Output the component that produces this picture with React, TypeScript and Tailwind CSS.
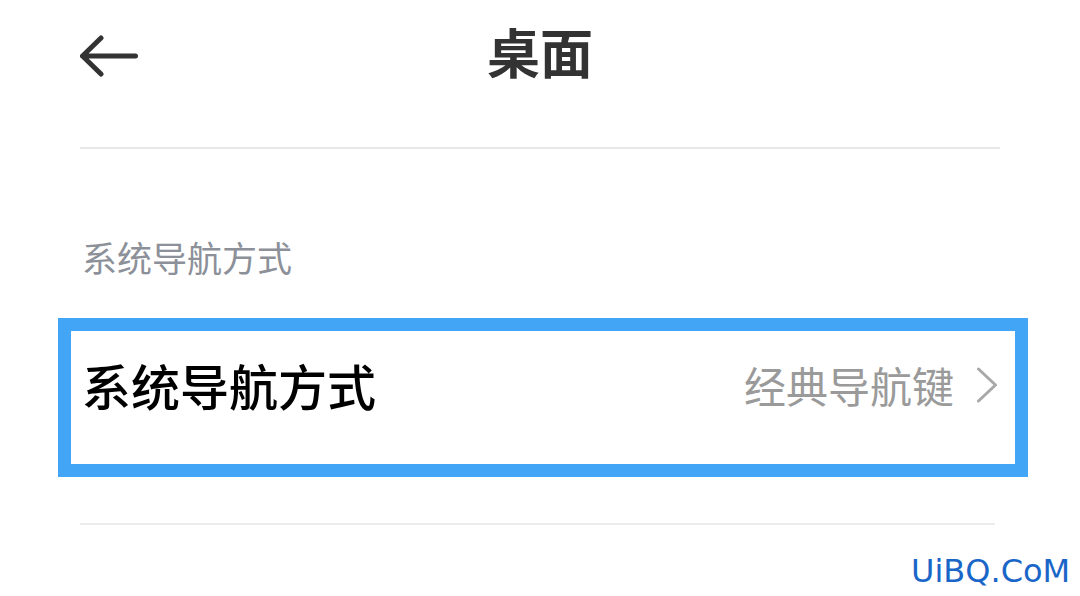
import React from "react";

export default function App() {
  const cjk = { fontFamily: '"Noto Sans CJK SC", "Noto Sans", sans-serif' };
  return (
    <div
      className="relative w-[1080px] h-[596px] overflow-hidden bg-white"
      style={cjk}
    >
      {/* Header */}
      <div className="relative h-[147px] px-[80px]">
        <div className="flex h-[116px] items-center">
          <svg width="58" height="42" viewBox="0 0 58 42" className="mt-[-4px]">
            <path
              d="M2.5 21 H55.5 M21 3 L2.5 21 L21 39"
              fill="none"
              stroke="#333333"
              strokeWidth="5"
              strokeLinecap="round"
              strokeLinejoin="round"
            />
          </svg>
        </div>
        <div className="absolute left-0 right-0 top-[19px] text-center text-[53px] font-bold leading-[64px] text-[#333333]">
          桌面
        </div>
      </div>
      <div className="mx-[80px] w-[920px] h-[2px] bg-[#e8e8e8]" />

      {/* Section header */}
      <div className="px-[82px] pt-[87px] text-[35px] leading-[42px] text-[#8c9099]">
        系统导航方式
      </div>

      {/* Highlighted item */}
      <div className="mt-[40px] ml-[58px] w-[970px] h-[159px] border-[13px] border-[#42a5f5] bg-white">
        <div className="flex h-full items-center pl-[11px] pr-[17px] pb-[26px]">
          <div className="flex-1 text-[49px] font-medium leading-[56px] text-black">
            系统导航方式
          </div>
          <div className="text-[42px] leading-[50px] text-[#9a9a9a]">经典导航键</div>
          <svg width="22" height="36" viewBox="0 0 22 36" className="ml-[22px]">
            <path
              d="M2.5 2 L19.5 18 L2.5 34"
              fill="none"
              stroke="#a8a8a8"
              strokeWidth="3"
              strokeLinecap="round"
              strokeLinejoin="round"
            />
          </svg>
        </div>
      </div>

      {/* Bottom divider */}
      <div className="mt-[46px] mx-[80px] w-[915px] h-[2px] bg-[#ebebeb]" />

      {/* Watermark */}
      <div
        className="absolute left-[911px] top-[552px] text-[32px] leading-[38px] text-[#1a66c8]"
        style={{ fontFamily: '"DejaVu Sans", sans-serif' }}
      >
        UiBQ.CoM
      </div>
    </div>
  );
}
